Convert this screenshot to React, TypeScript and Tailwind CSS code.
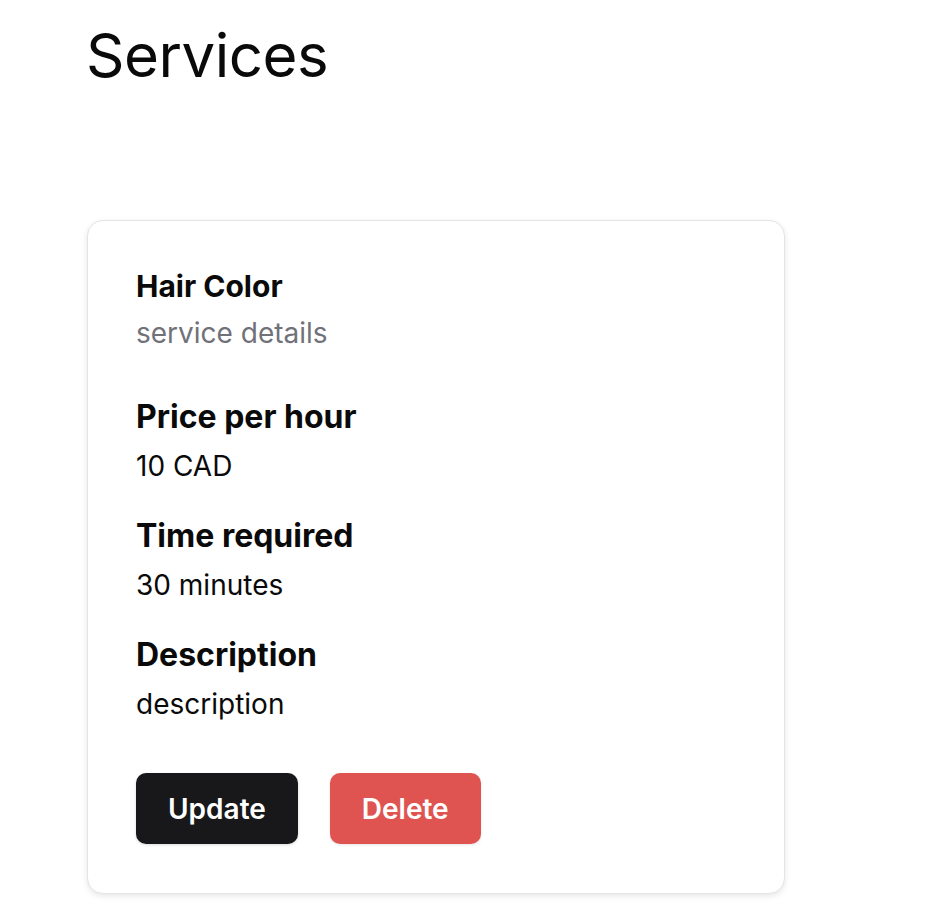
export default function App() {
    const fields = [
        { label: "Price per hour", value: "10 CAD" },
        { label: "Time required", value: "30 minutes" },
        { label: "Description", value: "description" },
    ]

    return (
        <div className="min-h-screen bg-white px-[87px] pt-[25px] text-[#0a0a0a]" style={{ fontFamily: "Inter, 'Noto Sans', sans-serif" }}>
            <h1 className="-ml-px text-[60px] leading-[60px] font-normal tracking-[-0.5px]">Services</h1>

            <div className="mt-[135px] w-[698px] rounded-2xl border border-[#e4e4e7] bg-white px-12 pt-12 pb-[49px] shadow-[0_2px_6px_rgba(0,0,0,0.1)]">
                <div>
                    <h2 className="-mt-px text-[30px] leading-[36px] font-bold">Hair Color</h2>
                    <p className="mt-[11px] text-[28px] leading-[36px] text-[#71717a]">service details</p>
                </div>

                <div className="mt-[48px] flex flex-col gap-[34px]">
                    {fields.map(f => (
                        <div key={f.label}>
                            <h3 className="text-[32px] leading-[36px] font-bold">{f.label}</h3>
                            <p className="mt-[13px] text-[28px] leading-[36px]">{f.value}</p>
                        </div>
                    ))}
                </div>

                <div className="mt-[51px] flex gap-8">
                    <button className="h-[71px] rounded-[10px] bg-[#18181b] px-8 text-[28px] font-semibold text-white shadow-[0_1px_3px_rgba(0,0,0,0.15)]">
                        Update
                    </button>
                    <button className="h-[71px] rounded-[10px] bg-[#df5451] px-8 text-[28px] font-semibold text-white shadow-[0_1px_3px_rgba(0,0,0,0.1)]">
                        Delete
                    </button>
                </div>
            </div>
        </div>
    )
}
